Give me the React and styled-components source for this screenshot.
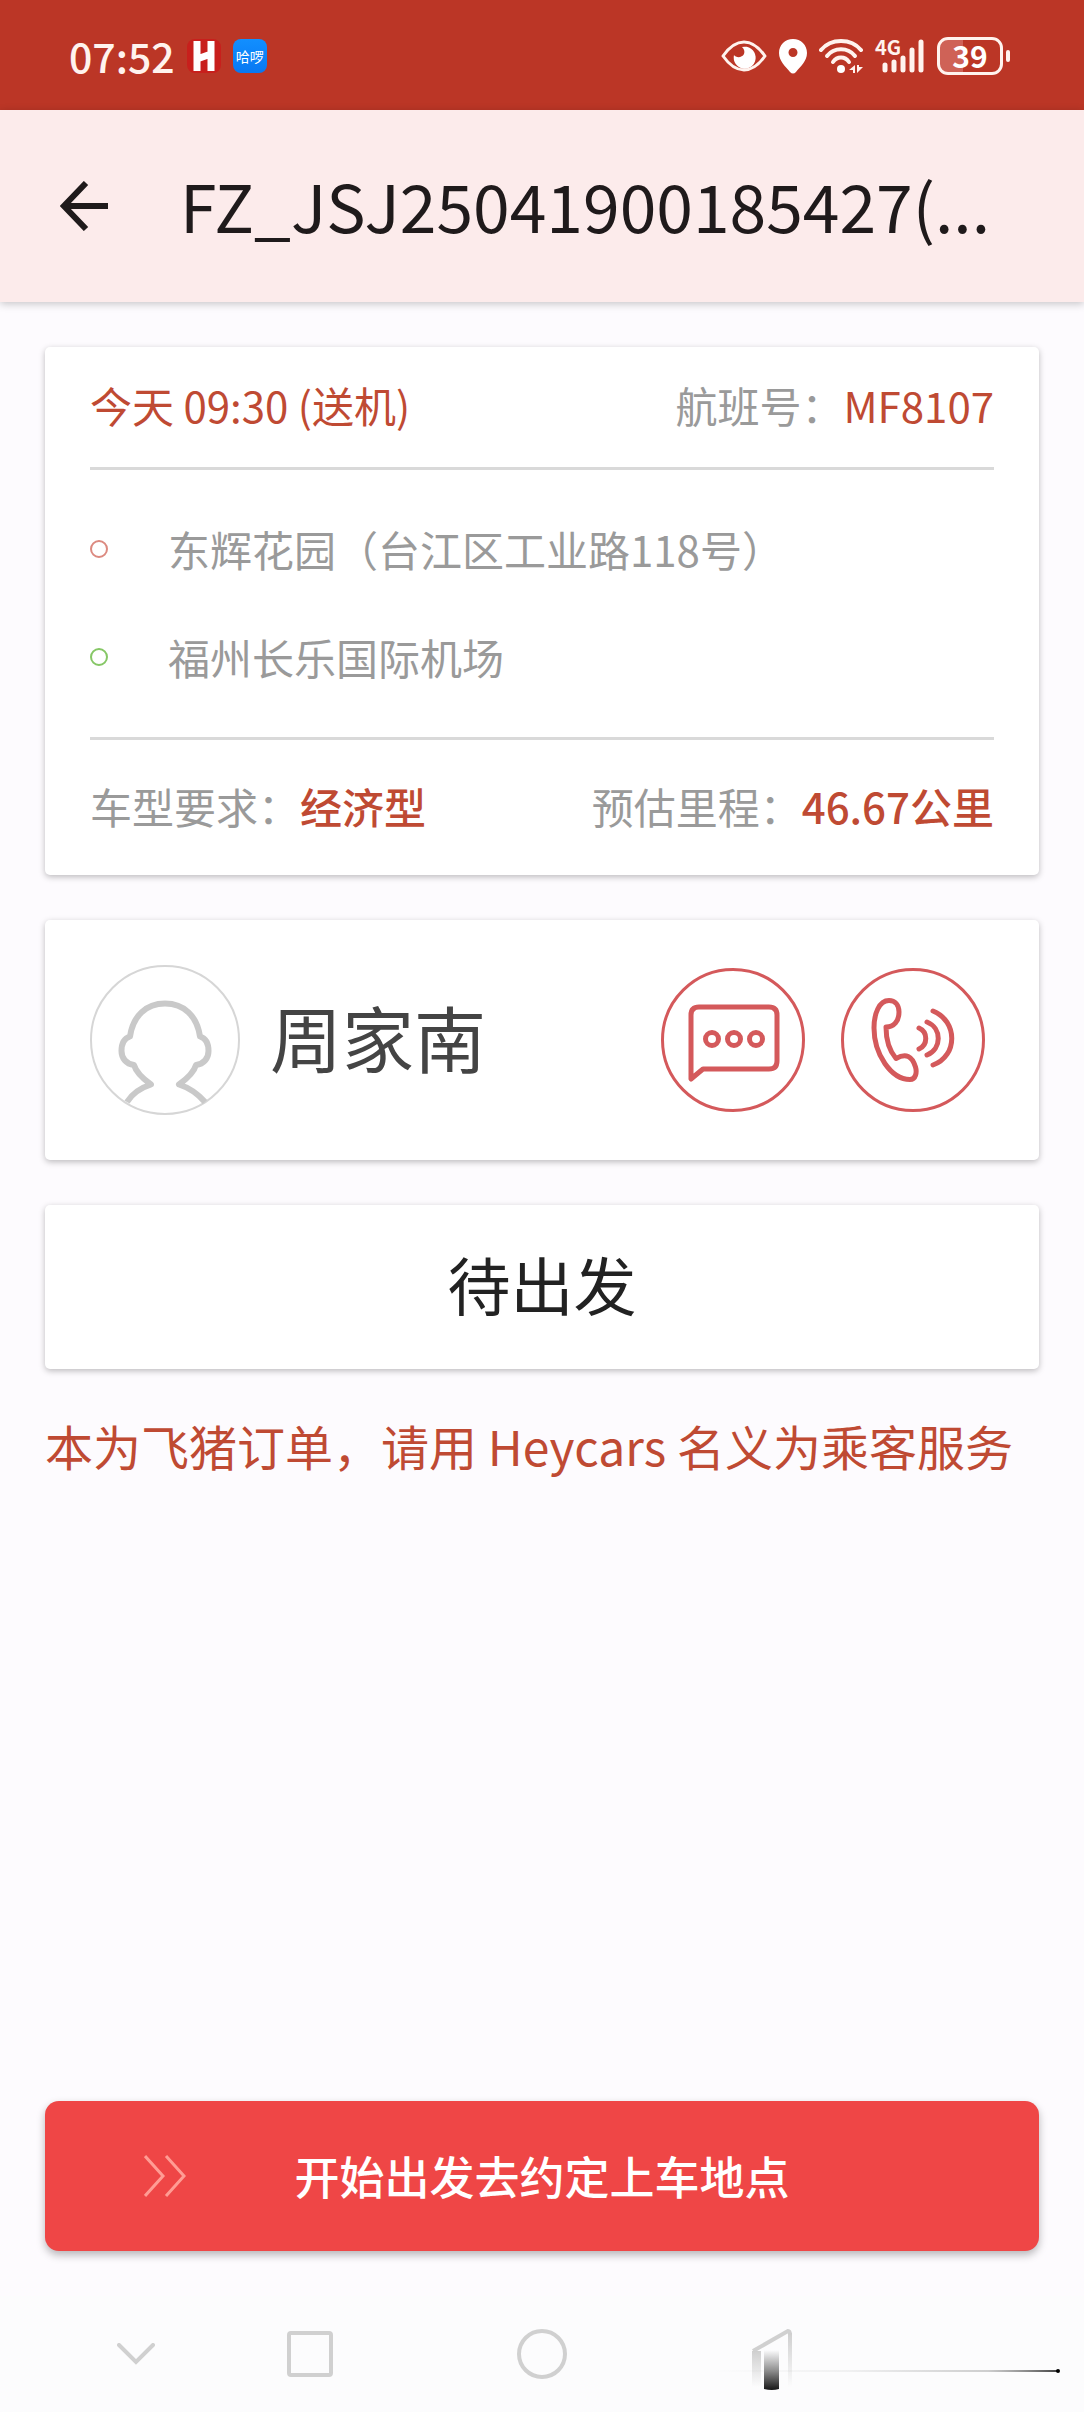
import React from "react";
import styled, { createGlobalStyle } from "styled-components";

const GlobalStyle = createGlobalStyle`
  *, *::before {
    box-sizing: border-box;
  }

  body {
    margin: 0;
    background-color: #fdfbfe;
    font-family: "Noto Sans CJK SC", "Noto Sans", sans-serif;
  }

  button {
    padding: 0;
    border: none;
    background: none;
    font-family: inherit;
  }

  svg {
    display: block;
    flex-shrink: 0;
  }

  h1, h2, p, dl, dt, dd, ul {
    margin: 0;
    padding: 0;
    font-weight: 400;
  }
`;

const Screen = styled.div`
  display: flex;
  flex-direction: column;
  min-height: 100vh;
`;

const StatusBar = styled.div`
  display: flex;
  align-items: center;
  justify-content: space-between;
  height: 110px;
  padding: 2px 74px 0 69px;
  background-color: #bb3626;
  color: #fff3ee;
`;

const StatusGroup = styled.div`
  display: flex;
  align-items: center;
  gap: 12px;
`;

const Clock = styled.span`
  padding-bottom: 2px;
  font-size: 41px;
  line-height: 48px;
  font-weight: 500;
`;

const AppBadge = styled.span`
  display: flex;
  align-items: center;
  justify-content: center;
  width: 34px;
  height: 34px;
  border-radius: 8px;
  background: ${({ $bg }) => $bg};
  color: #fff;
  font-size: 14px;
  line-height: 20px;
`;

const Battery = styled.span`
  display: flex;
  align-items: center;

  .cell {
    display: flex;
    align-items: center;
    justify-content: center;
    width: 66px;
    height: 38px;
    padding-bottom: 2px;
    border: 3px solid #fff3ee;
    border-radius: 11px;
    background: linear-gradient(to right, #cf6257 39%, transparent 39%);
    color: #fff;
    font-size: 30px;
    line-height: 32px;
    font-weight: 700;
  }

  .nub {
    width: 4px;
    height: 12px;
    margin-left: 3px;
    border-radius: 2px;
    background-color: #fff3ee;
  }
`;

const Header = styled.header`
  display: flex;
  align-items: center;
  gap: 70px;
  height: 192px;
  padding: 0 60px;
  background-color: #fcebeb;
  box-shadow: 0 2px 8px rgba(0, 0, 0, 0.22);
`;

const Title = styled.h1`
  padding-bottom: 4px;
  color: #1f1a1b;
  font-size: 66px;
  line-height: 96px;
  white-space: nowrap;
`;

const Content = styled.main`
  display: flex;
  flex: 1;
  flex-direction: column;
  gap: 45px;
  padding: 45px;
`;

const Card = styled.section`
  padding: 0 45px;
  border-radius: 5px;
  background-color: #fff;
  box-shadow: 0 2px 6px rgba(0, 0, 0, 0.26);
`;

const InfoRow = styled.dl`
  display: flex;
  align-items: center;
  justify-content: space-between;
  height: ${({ $height }) => $height}px;
  padding-bottom: 4px;
  font-size: 42px;
  line-height: 60px;
`;

const Field = styled.div`
  display: flex;

  dt {
    color: #9a9a9a;
  }

  dd {
    color: #bf4a33;
    font-weight: ${({ $strong }) => ($strong ? 500 : 400)};
  }
`;

const Stops = styled.ul`
  padding: 25px 0 26px;
  border: solid #d9d9d9;
  border-width: 3px 0;
  list-style-type: none;
`;

const Stop = styled.li`
  display: flex;
  align-items: center;
  gap: 60px;
  height: 108px;
  color: #9a9a9a;
  font-size: 42px;
  line-height: 60px;

  &::before {
    content: "";
    width: 18px;
    height: 18px;
    border: 2px solid ${({ $color }) => $color};
    border-radius: 50%;
  }
`;

const Passenger = styled.div`
  display: flex;
  align-items: center;
  height: 240px;
`;

const Name = styled.h2`
  flex: 1;
  margin-left: 30px;
  padding-bottom: 8px;
  color: #444;
  font-size: 72px;
  line-height: 96px;
`;

const Contact = styled.div`
  display: flex;
  gap: 36px;
  padding-right: 9px;
`;

const State = styled.p`
  padding-bottom: 8px;
  color: #222;
  font-size: 63px;
  line-height: 156px;
  text-align: center;
`;

const Notice = styled.p`
  color: #bf4a33;
  font-size: 48px;
  line-height: 62px;
`;

const StartButton = styled.button`
  display: grid;
  grid-template-columns: 1fr auto 1fr;
  align-items: center;
  height: 150px;
  margin: 0 45px 45px;
  padding: 0 99px;
  border-radius: 14px;
  background-color: #ef4646;
  box-shadow: 0 4px 9px rgba(0, 0, 0, 0.28);
  color: #fff;
  font-size: 45px;
  line-height: 66px;
  font-weight: 500;
`;

const NavBar = styled.nav`
  display: flex;
  height: 116px;
  padding: 0 194px 0 78px;
  background-color: #fcfcfd;
`;

const NavButton = styled.button`
  display: flex;
  flex: ${({ $grow }) => $grow} 1 0;
  align-items: center;
  justify-content: center;
`;

const EyeIcon = () => (
  <svg width="46" height="34" viewBox="0 0 46 34" fill="none">
    <path
      d="M2 17C9 7 15 3 23 3s14 4 21 14c-7 10-13 14-21 14S9 27 2 17Z"
      stroke="#fff3ee"
      strokeWidth="3"
      strokeLinejoin="round"
    />
    <path
      d="M21 8a11 11 0 1 1-8 8c2 3 8 3 10-1 1-3 0-5-2-7Z"
      fill="#fff"
    />
  </svg>
);

const PinIcon = () => (
  <svg width="28" height="36" viewBox="0 0 28 36">
    <path
      fillRule="evenodd"
      d="M14 1C6 1 0 7 0 15c0 8 7 14 11 19q3 3 6 0c4-5 11-11 11-19C28 7 22 1 14 1Zm0 9a4 4 0 1 1 0 9 4 4 0 0 1 0-9Z"
      fill="#fff"
    />
  </svg>
);

const WifiIcon = () => (
  <svg width="44" height="36" viewBox="0 0 44 36" fill="none">
    <g stroke="#fff3ee" strokeWidth="4" strokeLinecap="round">
      <path d="M2 12C12 0 32 0 42 12" />
      <path d="M8 18C15 9 29 9 36 18" />
      <path d="M14 24C18 18 26 18 30 24" />
    </g>
    <circle cx="22" cy="31" r="4" fill="#fff" />
    <path d="M36 27v8h-2v-3h-4Zm2 0v8l6-6h-4v-2Z" fill="#fff3ee" />
  </svg>
);

const SignalIcon = () => (
  <svg width="50" height="36" viewBox="0 0 50 36" overflow="visible">
    <text x="0" y="17" fill="#fff3ee" fontSize="20" fontWeight="700">
      4G
    </text>
    <g stroke="#fff3ee" strokeWidth="5" strokeLinecap="round">
      <path d="M10 27v5M19 24v8M28 20v12M37 12v20M46 4v28" />
    </g>
  </svg>
);

const BackArrow = () => (
  <svg width="50" height="50" viewBox="0 0 50 50" fill="none">
    <path
      d="M26 2 4 25l22 23M4 25h44"
      stroke="#1f1a1b"
      strokeWidth="6"
    />
  </svg>
);

const Avatar = () => (
  <svg width="150" height="150" viewBox="0 0 150 150" fill="none">
    <circle cx="75" cy="75" r="74" stroke="#d6d6d6" strokeWidth="2" />
    <path
      d="M37 137C42 129 50 123 61 119.500C52 113 46 107 44 100C36 99 31.500 93 31.500 86C31.500 78 35 73 40 71.500C43 51 56 38.500 75 38.500C94 38.500 107 51 110 71.500C115 73 118.500 78 118.500 86C118.500 93 114 99 106 100C104 107 98 113 89 119.500C100 123 108 129 115 137"
      stroke="#c9c9c9"
      strokeWidth="6"
      strokeLinejoin="round"
    />
  </svg>
);

const MessageIcon = () => (
  <svg
    width="144"
    height="144"
    viewBox="0 0 144 144"
    fill="none"
    stroke="#d4595b"
  >
    <circle cx="72" cy="72" r="70.500" strokeWidth="3" />
    <g strokeWidth="5" strokeLinejoin="round">
      <path d="M30 111V47q0-8 8-8h70q8 0 8 8v46q0 8-8 8H42Z" />
      <circle cx="51" cy="71" r="6.500" />
      <circle cx="73" cy="71" r="6.500" />
      <circle cx="95" cy="71" r="6.500" />
    </g>
  </svg>
);

const PhoneIcon = () => (
  <svg
    width="144"
    height="144"
    viewBox="0 0 144 144"
    fill="none"
    stroke="#d4595b"
  >
    <circle cx="72" cy="72" r="70.500" strokeWidth="3" />
    <g strokeWidth="5" strokeLinecap="round" strokeLinejoin="round">
      <path d="M45 59C53 59 58 53 58 44C58 37 54 32.500 48 32.500C38 32.500 33 46 33 60C33 86 50 111.500 69 111.500C75 111.500 76 104 74.500 99C71 88 65 85 55 90.500C47 81 45 70 45 59Z" />
      <path d="M78 60C87 64 87 77 78 81" />
      <path d="M86 54C101 60 101 81 86 87" />
      <path d="M92 43C117 53 117 88 92 97" />
    </g>
  </svg>
);

const ChevronsIcon = () => (
  <svg width="42" height="42" viewBox="0 0 42 42" fill="none">
    <path
      d="m1 1 18 20L1 41M22 1l18 20-18 20"
      stroke="#ff9c94"
      strokeWidth="3"
    />
  </svg>
);

const HideIcon = () => (
  <svg width="38" height="22" viewBox="0 0 38 22" fill="none">
    <path
      d="m2 2 17 17L36 2"
      stroke="#d0d0d0"
      strokeWidth="4"
      strokeLinecap="round"
    />
  </svg>
);

const RecentIcon = () => (
  <svg width="46" height="46" viewBox="0 0 46 46" fill="none">
    <rect
      x="2"
      y="2"
      width="42"
      height="42"
      rx="2"
      stroke="#d0d0d0"
      strokeWidth="4"
    />
  </svg>
);

const HomeIcon = () => (
  <svg width="50" height="50" viewBox="0 0 50 50" fill="none">
    <circle cx="25" cy="25" r="23" stroke="#d0d0d0" strokeWidth="4" />
  </svg>
);

// back triangle fading out, with the dark bar and the thin trail to its right
const NavBackIcon = () => (
  <svg
    width="44"
    height="72"
    viewBox="0 0 44 72"
    fill="none"
    overflow="visible"
  >
    <defs>
      <linearGradient id="fade" x1="0" y1="0" x2="0" y2="1">
        <stop offset="0" stopColor="#cfcfcf" />
        <stop offset="1" stopColor="#cfcfcf" stopOpacity="0" />
      </linearGradient>
      <linearGradient id="bar" x1="0" y1="0" x2="0" y2="1">
        <stop offset="0" stopColor="#fcfcfd" />
        <stop offset="0.500" stopColor="#929292" />
        <stop offset="1" stopColor="#161616" />
      </linearGradient>
      <linearGradient id="trail" x1="0" y1="0" x2="1" y2="0">
        <stop offset="0" stopColor="#888" stopOpacity="0" />
        <stop offset="0.400" stopColor="#888" stopOpacity="0.100" />
        <stop offset="0.800" stopColor="#888" stopOpacity="0.400" />
        <stop offset="1" stopColor="#444" />
      </linearGradient>
    </defs>
    <path d="M1 33 36 13q2 0 2 4" stroke="#d0d0d0" strokeWidth="4" />
    <rect x="0" y="33" width="9" height="36" fill="url(#fade)" />
    <rect x="36" y="15" width="4" height="54" fill="url(#fade)" />
    <path d="M12 32h15v39q-7 2-15 0Z" fill="url(#bar)" />
    <rect x="-40" y="52" width="345" height="2" fill="url(#trail)" />
    <circle cx="306" cy="53" r="2" fill="#000" />
  </svg>
);

const stops = [
  { name: "东辉花园（台江区工业路118号）", color: "#dc8a80" },
  { name: "福州长乐国际机场", color: "#86c766" },
];

const App = () => {
  return (
    <Screen>
      <GlobalStyle />
      <StatusBar>
        <StatusGroup>
          <Clock>07:52</Clock>
          <AppBadge $bg="#c81f1c">
            <svg width="22" height="32" viewBox="0 0 22 32">
              <path
                d="M4 1v30M18 1v30M4 19l14-5"
                stroke="#fff"
                strokeWidth="7"
              />
            </svg>
          </AppBadge>
          <AppBadge $bg="linear-gradient(#128fff, #0878f2)">哈啰</AppBadge>
        </StatusGroup>
        <StatusGroup>
          <EyeIcon />
          <PinIcon />
          <WifiIcon />
          <SignalIcon />
          <Battery>
            <span className="cell">39</span>
            <span className="nub" />
          </Battery>
        </StatusGroup>
      </StatusBar>

      <Header>
        <button aria-label="返回">
          <BackArrow />
        </button>
        <Title>FZ_JSJ25041900185427(...</Title>
      </Header>

      <Content>
        <Card>
          <InfoRow $height="120">
            <Field>
              <dd>今天 09:30 (送机)</dd>
            </Field>
            <Field>
              <dt>航班号：</dt>
              <dd>MF8107</dd>
            </Field>
          </InfoRow>
          <Stops>
            {stops.map((stop) => (
              <Stop key={stop.name} $color={stop.color}>
                {stop.name}
              </Stop>
            ))}
          </Stops>
          <InfoRow $height="135">
            <Field $strong>
              <dt>车型要求：</dt>
              <dd>经济型</dd>
            </Field>
            <Field $strong>
              <dt>预估里程：</dt>
              <dd>46.67公里</dd>
            </Field>
          </InfoRow>
        </Card>

        <Card>
          <Passenger>
            <Avatar />
            <Name>周家南</Name>
            <Contact>
              <button aria-label="发消息">
                <MessageIcon />
              </button>
              <button aria-label="打电话">
                <PhoneIcon />
              </button>
            </Contact>
          </Passenger>
        </Card>

        <Card>
          <State>待出发</State>
        </Card>

        <Notice>本为飞猪订单，请用 Heycars 名义为乘客服务</Notice>
      </Content>

      <StartButton>
        <ChevronsIcon />
        <span>开始出发去约定上车地点</span>
      </StartButton>

      <NavBar>
        <NavButton $grow="1" aria-label="收起">
          <HideIcon />
        </NavButton>
        <NavButton $grow="2" aria-label="最近任务">
          <RecentIcon />
        </NavButton>
        <NavButton $grow="2" aria-label="主屏幕">
          <HomeIcon />
        </NavButton>
        <NavButton $grow="2" aria-label="后退">
          <NavBackIcon />
        </NavButton>
      </NavBar>
    </Screen>
  );
};

export default App;
